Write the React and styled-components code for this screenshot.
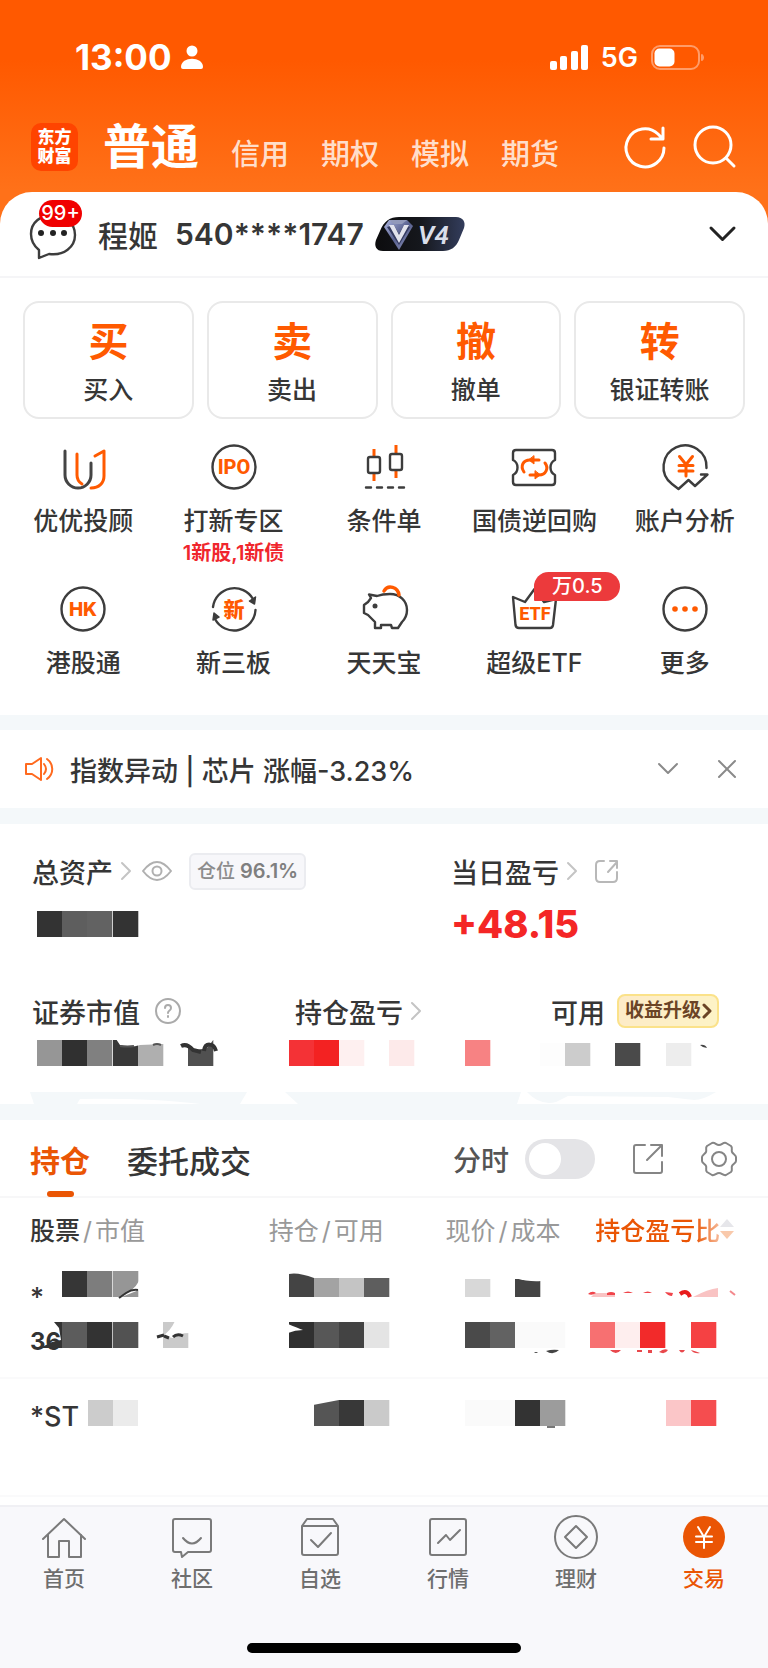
import React, { useState } from "react";
import styled, { createGlobalStyle } from "styled-components";

const GlobalStyle = createGlobalStyle`
  * {
    box-sizing: border-box;
  }
  body {
    margin: 0;
    background: #fff;
    color: #363636;
    font-family: "Inter", "Noto Sans CJK SC", sans-serif;
    font-weight: 500;
  }
  button {
    padding: 0;
    border: 0;
    background: none;
    color: inherit;
    font: inherit;
    cursor: pointer;
  }
  a {
    color: inherit;
    text-decoration: none;
  }
  svg {
    display: block;
    flex: none;
    overflow: visible;
  }
`;

const orange = "#ff5a00";
const deepOrange = "#ea5504";
const dark = "#3d3d3d";

// Layout

const Page = styled.div`
  display: flex;
  flex-direction: column;
  min-height: 100vh;
  background: linear-gradient(#ff5900 60px, #ff7119 190px) no-repeat;
  background-size: 100% 240px;
`;

const Sheet = styled.main`
  flex: 1;
  display: flex;
  flex-direction: column;
  background: #fff;
  border-radius: 32px 32px 0 0;
`;

const Divider = styled.div`
  height: ${(p) => p.$height || 16}px;
  background: #f4f8fa;
`;

const Spacer = styled.div`
  flex: 1;
`;

// Status bar

const StatusBar = styled.div`
  display: flex;
  align-items: center;
  height: 114px;
  padding: 0 64px 0 75px;
  color: #fff;
`;

const Clock = styled.span`
  margin-right: 9px;
  font-size: 35px;
  font-weight: 700;
`;

const Network = styled.span`
  margin: 0 13px;
  font-size: 27px;
  font-weight: 600;
`;

// Header

const Header = styled.header`
  display: flex;
  align-items: center;
  height: 78px;
  padding: 0 33px 12px 31px;
  color: #fff;
`;

const Logo = styled.div`
  width: 47px;
  padding: 5px 0;
  border-radius: 10px;
  background: #ff4400;
  font-size: 17px;
  font-weight: 900;
  line-height: 19px;
  text-align: center;
`;

const AccountTabs = styled.nav`
  flex: 1;
  display: flex;
  align-items: flex-end;
  gap: 32px;
  margin-left: 25px;
`;

const AccountTab = styled.a`
  font-size: ${(p) => (p.$active ? 48 : 29)}px;
  font-weight: ${(p) => (p.$active ? 700 : 500)};
  line-height: ${(p) => (p.$active ? 56 : 40)}px;
  color: ${(p) => (p.$active ? "#fff" : "rgba(255, 255, 255, 0.8)")};
`;

const HeaderActions = styled.div`
  display: flex;
  gap: 27px;
`;

// Account row

const AccountRow = styled.section`
  display: flex;
  align-items: center;
  height: 86px;
  padding: 0 32px 0 28px;
  border-bottom: 2px solid #f5f5f7;
`;

const Messages = styled.button`
  position: relative;
  margin-right: 20px;
`;

const UnreadBadge = styled.span`
  position: absolute;
  top: -7px;
  left: 11px;
  width: 43px;
  border-radius: 14px;
  background: #f00000;
  color: #fff;
  font-size: 20px;
  line-height: 27px;
  text-align: center;
`;

const AccountName = styled.span`
  margin-right: 17px;
  font-size: 30px;
`;

const AccountNumber = styled.span`
  margin-right: 11px;
  font-size: 30px;
  font-weight: 600;
`;

const ExpandButton = styled.button`
  margin-left: auto;
`;

// Trade buttons

const TradeGrid = styled.div`
  display: grid;
  grid-template-columns: repeat(4, 1fr);
  gap: 13px;
  padding: 23px 23px 0;
`;

const TradeButton = styled.button`
  height: 118px;
  padding-top: 6px;
  border: 2px solid #e9e9e9;
  border-radius: 16px;
  font-size: 25px;
  line-height: 36px;
`;

const TradeGlyph = styled.strong`
  display: block;
  margin-bottom: 6px;
  color: ${orange};
  font-size: 40px;
  font-weight: 700;
  line-height: 48px;
`;

// Shortcuts

const ShortcutGrid = styled.div`
  display: grid;
  grid-template-columns: repeat(5, 1fr);
  grid-auto-rows: 142px;
  padding: 24px 8px 0;
  margin-bottom: -12px;
`;

const Shortcut = styled.a`
  display: flex;
  flex-direction: column;
  align-items: center;
  font-size: 25px;
  line-height: 36px;
  white-space: nowrap;
`;

const ShortcutIcon = styled.span`
  position: relative;
  margin-bottom: 12px;
`;

const ShortcutBadge = styled.span`
  position: absolute;
  top: -13px;
  left: 24px;
  width: 86px;
  border-radius: 15px 15px 15px 1px;
  background: #ec3a3c;
  color: #fff;
  font-size: 20px;
  line-height: 29px;
  text-align: center;
`;

const ShortcutNote = styled.span`
  color: #f0262d;
  font-size: 20px;
  font-weight: 600;
  line-height: 28px;
`;

// News

const NewsRow = styled.section`
  display: flex;
  align-items: center;
  height: 78px;
  padding: 0 32px 0 24px;
`;

const NewsText = styled.a`
  flex: 1;
  margin-left: 16px;
  font-size: 27px;
`;

const NewsActions = styled.div`
  display: flex;
  align-items: center;
  gap: 40px;
`;

// Assets

const Assets = styled.section`
  padding-top: 30px;
`;

const AssetGrid = styled.div`
  display: grid;
  grid-template-columns: ${(p) => p.$columns};
  margin-bottom: ${(p) => p.$gap || 0}px;
  padding: 0 32px;
`;

const AssetLabel = styled.div`
  display: flex;
  align-items: center;
  gap: 8px;
  height: 36px;
  padding-bottom: 2px;
  font-size: 27px;
  white-space: nowrap;
`;

const AssetValue = styled.div`
  display: flex;
  align-items: center;
  height: ${(p) => p.$height}px;
  margin-top: 10px;
  color: #f42626;
  font-size: 38px;
  font-weight: 800;
`;

const PositionTag = styled.span`
  margin-left: 6px;
  padding: 0 6px;
  border: 2px solid #ebecf0;
  border-radius: 6px;
  background: #f7f7fa;
  color: #8c8c8c;
  font-size: 19px;
  line-height: 32px;

  b {
    color: #7f7f7f;
    font-size: 20px;
    font-weight: 600;
  }
`;

const UpgradeTag = styled.a`
  display: flex;
  align-items: center;
  gap: 2px;
  margin-left: 4px;
  padding: 0 6px;
  border: 2px solid #fbe28a;
  border-radius: 8px;
  background: linear-gradient(100deg, #fdebc8, #fdf3c6);
  color: #6b4426;
  font-size: 19px;
  font-weight: 700;
  line-height: 30px;
`;

// Holdings

const HoldingsBar = styled.div`
  display: flex;
  align-items: center;
  height: 78px;
  padding: 2px 31px 0 30px;
  border-bottom: 2px solid #f7f7f8;
`;

const HoldingsTab = styled.button`
  position: relative;
  height: 76px;
  margin-right: 37px;
  color: ${(p) => (p.$active ? deepOrange : "#363636")};
  font-size: ${(p) => (p.$active ? 30 : 31)}px;
  font-weight: ${(p) => (p.$active ? 700 : 500)};

  &::after {
    content: "";
    display: ${(p) => (p.$active ? "block" : "none")};
    position: absolute;
    bottom: 0;
    left: calc(50% - 13px);
    width: 27px;
    height: 6px;
    border-radius: 3px;
    background: ${deepOrange};
  }
`;

const HoldingsActions = styled.div`
  display: flex;
  align-items: center;
  gap: 37px;
  margin-left: auto;
`;

const SwitchLabel = styled.label`
  display: flex;
  align-items: center;
  gap: 16px;
  color: #555;
  font-size: 28px;
`;

const Switch = styled.input`
  appearance: none;
  display: flex;
  width: 70px;
  height: 40px;
  margin: 0;
  padding: 4px;
  border-radius: 20px;
  background: ${(p) => (p.checked ? deepOrange : "#e4e4e7")};
  justify-content: ${(p) => (p.checked ? "flex-end" : "flex-start")};

  &::before {
    content: "";
    width: 32px;
    height: 32px;
    border-radius: 50%;
    background: #fff;
  }
`;

const HoldingsTable = styled.table`
  width: 100%;
  border-collapse: collapse;
  table-layout: fixed;

  th {
    height: 62px;
    padding: 0;
    color: #999;
    font-size: 25px;
    font-weight: 400;
    text-align: left;
    white-space: nowrap;
  }
  td {
    height: 118px;
    padding: 11px 0 0;
    border-bottom: 2px solid #fafafb;
    vertical-align: top;
  }
  th:first-child,
  td:first-child {
    padding-left: 30px;
  }
  th:last-child,
  td:last-child {
    padding-left: 4px;
  }
  th b {
    color: #363636;
    font-weight: 500;
  }
`;

const Slash = styled.span`
  padding: 0 3px;
`;

const SortButton = styled.button`
  display: flex;
  align-items: center;
  color: ${deepOrange};
  font-weight: 500;

  span {
    mask-image: linear-gradient(90deg, #000 80%, rgba(0, 0, 0, 0.4));
  }
`;

const StockLine = styled.div`
  display: flex;
  height: 51px;
`;

const StockName = styled.span`
  width: ${(p) => p.$width}px;
  padding-top: 9px;
  font-size: 27px;
  line-height: 36px;
`;

// Tab bar

const TabBar = styled.footer`
  padding: 8px 0 15px;
  border-top: 2px solid #f0f0f4;
  background: #f8f8fb;
`;

const TabList = styled.nav`
  display: grid;
  grid-template-columns: repeat(6, 1fr);
  margin-bottom: 49px;
`;

const Tab = styled.a`
  display: flex;
  flex-direction: column;
  align-items: center;
  gap: 5px;
  color: ${(p) => (p.$active ? deepOrange : "#6e6e6e")};
  font-size: 21px;
  line-height: 30px;
`;

const HomeIndicator = styled.div`
  width: 274px;
  height: 10px;
  margin: 0 auto;
  border-radius: 5px;
  background: #000;
`;

// Icons

const Icon = ({ w = 48, h = w, color = dark, stroke = 2.4, children }) => (
  <svg
    width={w}
    height={h}
    viewBox={`0 0 ${w} ${h}`}
    fill="none"
    stroke={color}
    strokeWidth={stroke}
    strokeLinecap="round"
    strokeLinejoin="round"
    aria-hidden="true"
  >
    {children}
  </svg>
);

const IconText = styled.text`
  fill: ${orange};
  stroke: none;
  font-family: ${(p) => p.$font || "Roboto"}, "Noto Sans CJK SC", sans-serif;
  font-size: ${(p) => p.$size || 20}px;
  font-weight: 800;
  text-anchor: middle;
`;

const Chevron = () => (
  <Icon w={10} h={18} color="#c4c4c4" stroke={2}>
    <path d="M1 1l8 8-8 8" />
  </Icon>
);

const VipBadge = () => (
  <svg width="90" height="36" viewBox="0 0 90 36" role="img" aria-label="V4">
    <defs>
      <linearGradient id="vip" x1="0" x2="1">
        <stop offset="0" stopColor="#0c0c0e" />
        <stop offset="0.5" stopColor="#15171c" />
        <stop offset="1" stopColor="#333d5c" />
      </linearGradient>
      <linearGradient id="gem" x1="0" x2="1" y2="1">
        <stop offset="0" stopColor="#aeb6e0" />
        <stop offset="0.5" stopColor="#59618f" />
        <stop offset="1" stopColor="#8d93b8" />
      </linearGradient>
    </defs>
    <path
      d="M24 1h57c7 0 10 5 8 11l-5 12c-3 7-8 11-16 11H8c-7 0-9-5-7-11l4-9C9 5 15 1 24 1z"
      fill="url(#vip)"
    />
    <path d="M14 4h18l6 6-14 24L9 11z" fill="url(#gem)" />
    <path d="M12 11l7-2 5 9 5-9 6 2-11 18z" fill="#343a60" />
    <path d="M14 9h5l5 10 5-10h5l-10 18z" fill="#e2e3ed" />
    <path d="M14 4h18l-5 4h-8z" fill="#9299ba" />
    <text
      x="43"
      y="28"
      fill="#d9deea"
      fontFamily="Roboto, sans-serif"
      fontSize="26"
      fontStyle="italic"
      fontWeight="600"
    >
      V4
    </text>
  </svg>
);

const shortcuts = [
  {
    label: "优优投顾",
    icon: (
      <>
        <path d="M6 8v24a13 13 0 0 0 26 0V20" stroke="#444" strokeWidth="3" />
        <path d="M18 11v21q0 6 5 9" stroke={orange} strokeWidth="3" />
        <path d="M36 13l9-5v25c0 7-5 12-13 12" stroke={orange} strokeWidth="3" />
      </>
    ),
  },
  {
    label: "打新专区",
    note: "1新股,1新债",
    icon: (
      <>
        <circle cx="24" cy="24" r="21.5" />
        <IconText x="24" y="31">
          IPO
        </IconText>
      </>
    ),
  },
  {
    label: "条件单",
    icon: (
      <>
        <g stroke={orange} strokeWidth="3" strokeLinecap="butt">
          <path d="M14 6v7M14 31v7M36 2v8M36 28v7" />
        </g>
        <rect x="8" y="14" width="12" height="16" rx="2" />
        <rect x="30" y="11" width="12" height="16" rx="2" />
        <path d="M6 44.500h5M17 44.500h5M28 44.500h5M39 44.500h5" />
      </>
    ),
  },
  {
    label: "国债逆回购",
    icon: (
      <>
        <path d="M6 7h36q3 0 3 3v7c-6 3-6 12 0 15v7q0 3-3 3H6q-3 0-3-3v-7c6-3 6-12 0-15v-7q0-3 3-3z" />
        <g stroke={orange} strokeWidth="3">
          <path d="M14 29c-4-6-1-12 6-12h9M35 20c4 5 1 12-6 12h-9" />
          <path
            d="M24 13v8l-5-4zM25 28v8l5-4z"
            fill={orange}
            strokeWidth="1"
          />
        </g>
      </>
    ),
  },
  {
    label: "账户分析",
    icon: (
      <>
        <path d="M45.500 25A21.500 21.500 0 1 0 11 41l6.500 5 10-9 6.500 6 12.500-11.500H40" />
        <path
          d="M18.500 13.500l6.500 8 6.500-8M25 22v11M18 22.500h14M18 28h14"
          stroke={orange}
          strokeWidth="3"
        />
      </>
    ),
  },
  {
    label: "港股通",
    icon: (
      <>
        <circle cx="24" cy="24" r="21.500" />
        <IconText x="24" y="31" $font="Inter" $size={19}>
          HK
        </IconText>
      </>
    ),
  },
  {
    label: "新三板",
    icon: (
      <>
        <path d="M3 22A21.500 21.500 0 0 1 43 14M45.500 25A21.500 21.500 0 0 1 5 34" />
        <path d="M45.500 12l-1 7-5-3zM3 35l1-7 5 4z" fill={dark} strokeWidth="1.500" />
        <IconText x="24" y="32" $size={21}>
          新
        </IconText>
      </>
    ),
  },
  {
    label: "天天宝",
    icon: (
      <>
        <path d="M9 9.500l8 1.500c4-1.500 8-2 13-2 10 0 17 7 17 16 0 5-2 9-5 12l-4 6h-6l-1-3H21v3h-6v-6l-7-7-4-2v-8l4-3 3-4z" />
        <circle cx="15" cy="21" r="2.500" fill={dark} stroke="none" />
        <path d="M24 6c4-7 14-4 15 4" stroke={orange} strokeWidth="3.500" />
      </>
    ),
  },
  {
    label: "超级ETF",
    badge: "万0.5",
    icon: (
      <>
        <path d="M3 12l12 5L24.500 4 34 17l12-3-3 26q-.5 3-3 3H9q-3 0-3.500-3z" />
        <IconText x="25" y="35" $size={18}>
          ETF
        </IconText>
      </>
    ),
  },
  {
    label: "更多",
    icon: (
      <>
        <circle cx="24" cy="24" r="21.500" />
        <g fill={orange} stroke="none">
          <circle cx="14" cy="24" r="2.800" />
          <circle cx="24" cy="24" r="2.800" />
          <circle cx="34" cy="24" r="2.800" />
        </g>
      </>
    ),
  },
];

const tabs = [
  {
    label: "首页",
    icon: (
      <>
        <path d="M1 24L22 4l21 20" />
        <path d="M6 20v22h11V26h10v16h12V20" />
      </>
    ),
  },
  {
    label: "社区",
    icon: (
      <>
        <path d="M5 4h34q2 0 2 2v29q0 2-2 2H18l-6 5-1-5H5q-2 0-2-2V6q0-2 2-2z" />
        <path d="M13 23q9 11 18 0" />
      </>
    ),
  },
  {
    label: "自选",
    icon: (
      <>
        <path d="M4 11l5-7h26l5 7v27q0 2-2 2H6q-2 0-2-2zM4 11h36" />
        <path d="M13 25l7 7 13-14" />
      </>
    ),
  },
  {
    label: "行情",
    icon: (
      <>
        <rect x="4" y="4" width="36" height="36" rx="2" />
        <path d="M12 28l8-8 4 5 10-10" />
      </>
    ),
  },
  {
    label: "理财",
    icon: (
      <>
        <circle cx="22" cy="22" r="21" />
        <path d="M22 11l11 11-11 11-11-11z" />
      </>
    ),
  },
  {
    label: "交易",
    active: true,
    icon: (
      <>
        <circle cx="22" cy="22" r="21" fill={deepOrange} stroke="none" />
        <path
          d="M16 12l6 10 6-10M22 22v11M14 21.500h16M14 27h16"
          stroke="#fff"
        />
      </>
    ),
  },
];

const trades = [
  ["买", "买入"],
  ["卖", "卖出"],
  ["撤", "撤单"],
  ["转", "银证转账"],
];

// Hides private amounts behind a strip of blocks: [x, colour] per block
const Mosaic = ({ cells, top = 0, height = 26, children }) => (
  <svg width="100" height="26" viewBox="0 0 100 26" aria-hidden="true">
    {cells.map(([x, color]) => (
      <rect key={x} x={x} y={top} width="25.300" height={height - top} fill={color} />
    ))}
    {children}
  </svg>
);

const App = () => {
  const [minuteChart, setMinuteChart] = useState(false);

  return (
    <>
      <GlobalStyle />
      <Page>
        <StatusBar>
          <Clock>13:00</Clock>
          <Icon w={22} h={24} color="none">
            <circle cx="11" cy="6" r="5.500" fill="#fff" />
            <path d="M0 22c0-11 22-11 22 0q0 2-2 2H2q-2 0-2-2z" fill="#fff" />
          </Icon>
          <Spacer />
          <Icon w={38} h={25} color="none">
            <g fill="#fff">
              <rect y="16" width="7" height="9" rx="2" />
              <rect x="10" y="11" width="7" height="14" rx="2" />
              <rect x="21" y="6" width="7" height="19" rx="2" />
              <rect x="31" width="7" height="25" rx="2" />
            </g>
          </Icon>
          <Network>5G</Network>
          <Icon w={53} h={25} color="#ff9c69" stroke={2}>
            <rect x="1" y="1" width="47" height="23" rx="8" />
            <rect x="3.500" y="3.500" width="20" height="18" rx="5" fill="#fff" stroke="none" />
            <path d="M51 10q2 2.500 0 5z" />
          </Icon>
        </StatusBar>

        <Header>
          <Logo>
            东方
            <br />
            财富
          </Logo>
          <AccountTabs>
            <AccountTab href="#normal" $active>
              普通
            </AccountTab>
            <AccountTab href="#credit">信用</AccountTab>
            <AccountTab href="#options">期权</AccountTab>
            <AccountTab href="#paper">模拟</AccountTab>
            <AccountTab href="#futures">期货</AccountTab>
          </AccountTabs>
          <HeaderActions>
            <button aria-label="刷新">
              <Icon w={42} color="#fff" stroke={3}>
                <path d="M40 22A19 19 0 1 1 34 8l5 5M39 2v11H27" />
              </Icon>
            </button>
            <button aria-label="搜索">
              <Icon w={42} color="#fff" stroke={3}>
                <circle cx="20" cy="19" r="18" />
                <path d="M33 32l8 8" />
              </Icon>
            </button>
          </HeaderActions>
        </Header>

        <Sheet>
          <AccountRow>
            <Messages aria-label="消息">
              <Icon w={50} h={54}>
                <path d="M11 43v8l10-4C36 49 47 40 47 28S37 8 25 8 3 15 3 27c0 7 3 12 8 16z" />
                <g fill="#222" stroke="none">
                  <circle cx="13" cy="26" r="3" />
                  <circle cx="25" cy="26" r="3" />
                  <circle cx="36" cy="26" r="3" />
                </g>
              </Icon>
              <UnreadBadge>99+</UnreadBadge>
            </Messages>
            <AccountName>程姬</AccountName>
            <AccountNumber>540****1747</AccountNumber>
            <VipBadge />
            <ExpandButton aria-label="切换账户">
              <Icon w={27} h={16} color="#222" stroke={3}>
                <path d="M2 2l11.500 11.500L25 2" />
              </Icon>
            </ExpandButton>
          </AccountRow>

          <TradeGrid>
            {trades.map(([glyph, label]) => (
              <TradeButton key={label}>
                <TradeGlyph>{glyph}</TradeGlyph>
                {label}
              </TradeButton>
            ))}
          </TradeGrid>

          <ShortcutGrid>
            {shortcuts.map(({ label, icon, note, badge }) => (
              <Shortcut key={label} href="#shortcut">
                <ShortcutIcon>
                  <Icon>{icon}</Icon>
                  {badge && <ShortcutBadge>{badge}</ShortcutBadge>}
                </ShortcutIcon>
                {label}
                {note && <ShortcutNote>{note}</ShortcutNote>}
              </Shortcut>
            ))}
          </ShortcutGrid>

          <Divider $height={15} />
          <NewsRow>
            <Icon w={30} h={26} color="#ff6a1f" stroke={2}>
              <path d="M2 8h6l9-6v22l-9-6H2zM20 8q4 5 0 10M23 3c7 5 7 15 0 20" />
            </Icon>
            <NewsText href="#news">指数异动 | 芯片 涨幅-3.23%</NewsText>
            <NewsActions>
              <button aria-label="展开">
                <Icon w={20} h={12} color="#8a8a8a" stroke={2}>
                  <path d="M1 1l9 9 9-9" />
                </Icon>
              </button>
              <button aria-label="关闭">
                <Icon w={18} color="#8a8a8a" stroke={2}>
                  <path d="M1 1l16 16M17 1L1 17" />
                </Icon>
              </button>
            </NewsActions>
          </NewsRow>
          <Divider />

          <Assets>
            <AssetGrid $columns="419fr 285fr" $gap={46}>
              <div>
                <AssetLabel>
                  总资产
                  <Chevron />
                  <Icon w={36} h={24} color="#b0b0b0" stroke={2}>
                    <path d="M4 12q14-18 28 0-14 18-28 0z" />
                    <circle cx="18" cy="12" r="4.500" />
                  </Icon>
                  <PositionTag>
                    仓位 <b>96.1%</b>
                  </PositionTag>
                </AssetLabel>
                <AssetValue $height={48}>
                  <Mosaic
                    cells={[
                      [5, "#333"],
                      [30, "#5e5e5e"],
                      [55, "#626262"],
                      [81, "#333"],
                    ]}
                  />
                </AssetValue>
              </div>
              <div>
                <AssetLabel>
                  当日盈亏
                  <Chevron />
                  <Icon w={38} h={24} color="#b8b8b8" stroke={2}>
                    <path d="M19 2h-4q-4 0-4 4v13q0 4 4 4h13q4 0 4-4v-6M23 13L32 3M25 2h7v7" />
                  </Icon>
                </AssetLabel>
                <AssetValue $height={48}>+48.15</AssetValue>
              </div>
            </AssetGrid>

            <AssetGrid $columns="263fr 256fr 185fr" $gap={26}>
              <div>
                <AssetLabel>
                  证券市值
                  <Icon w={38} h={26} color="#aaa" stroke={2}>
                    <circle cx="20" cy="13" r="12" />
                    <path d="M17 10c0-4 6-4 6 0 0 3-3 2-3 5M20 18v1" />
                  </Icon>
                </AssetLabel>
                <AssetValue $height={26}>
                  <Mosaic
                    cells={[
                      [5, "#969696"],
                      [30, "#303030"],
                      [55, "#808080"],
                      [81, "#383838"],
                      [106, "#afafaf"],
                      [156, "#505050"],
                    ]}
                  >
                    <path d="M84-1l4 6q10 3 20 0l24-1v-5z" fill="#fff" />
                    <path
                      d="M88 6q8 1 14 0M121 5q4-2 8 0"
                      fill="none"
                      stroke="#555"
                      strokeWidth="2"
                    />
                    <path d="M155-1v7l10 4 10-2 7-9z" fill="#fff" />
                    <path
                      d="M149 6q6-3 12 4l8 2M172 11c1-9 10-8 12 0"
                      fill="none"
                      stroke="#333"
                      strokeWidth="4"
                    />
                  </Mosaic>
                </AssetValue>
              </div>
              <div>
                <AssetLabel>
                  持仓盈亏
                  <Chevron />
                </AssetLabel>
                <AssetValue $height={26}>
                  <Mosaic
                    cells={[
                      [-6, "#f43236"],
                      [19, "#f32222"],
                      [44, "#fef0f0"],
                      [94, "#fdeaea"],
                      [170, "#f78283"],
                    ]}
                  />
                </AssetValue>
              </div>
              <div>
                <AssetLabel>
                  可用
                  <UpgradeTag href="#upgrade">
                    收益升级
                    <Icon w={8} h={14} color="#6b4426" stroke={3}>
                      <path d="M1 1l6 6-6 6" />
                    </Icon>
                  </UpgradeTag>
                </AssetLabel>
                <AssetValue $height={26}>
                  <Mosaic
                    top={3}
                    cells={[
                      [-11, "#fdfdfd"],
                      [14, "#ccc"],
                      [64, "#4a4a4a"],
                      [115, "#ededed"],
                    ]}
                  >
                    <path d="M149 5q5-1 7 3-4 0-7-3z" fill="#444" />
                  </Mosaic>
                </AssetValue>
              </div>
            </AssetGrid>
            <svg width="100%" height="12" viewBox="0 0 768 12" preserveAspectRatio="none" aria-hidden="true">
              <g fill="#f4f8fa">
                <path d="M30 0h217l-7 12h-40q-50-6-120-5l-3 5H34z" />
                <path d="M285 0h236l-4 12H298z" />
                <path d="M527 0h189q-13 8-22 8l-26-3-100-1-12 6q-16 4-29-10z" />
              </g>
            </svg>
          </Assets>
          <Divider />

          <HoldingsBar>
            <HoldingsTab $active>持仓</HoldingsTab>
            <HoldingsTab>委托成交</HoldingsTab>
            <HoldingsActions>
              <SwitchLabel>
                分时
                <Switch
                  type="checkbox"
                  role="switch"
                  checked={minuteChart}
                  onChange={(e) => setMinuteChart(e.target.checked)}
                />
              </SwitchLabel>
              <button aria-label="分享">
                <Icon w={32} color="#858585" stroke={2}>
                  <path d="M13 2H4q-2 0-2 2v24q0 2 2 2h24q2 0 2-2v-9M15 17L30 2M19 2h11v11" />
                </Icon>
              </button>
              <button aria-label="设置">
                <Icon w={36} color="#858585" stroke={2}>
                  <path d="M11 2c3-1 4 2 7 2s4-3 7-2l5 3c2 2 0 4 1 6s4 3 4 5v4c0 2-3 3-4 5s1 4-1 6l-5 3c-3 1-4-2-7-2s-4 3-7 2l-5-3c-2-2 0-4-1-6s-4-3-4-5v-4c0-2 3-3 4-5s-1-4 1-6z" />
                  <circle cx="18" cy="18" r="7" />
                </Icon>
              </button>
            </HoldingsActions>
          </HoldingsBar>

          <HoldingsTable>
            <colgroup>
              <col width="35%" />
              <col width="23%" />
              <col width="19%" />
              <col />
            </colgroup>
            <thead>
              <tr>
                <th>
                  <b>股票</b>
                  <Slash>/</Slash>市值
                </th>
                <th>
                  持仓<Slash>/</Slash>可用
                </th>
                <th>
                  现价<Slash>/</Slash>成本
                </th>
                <th>
                  <SortButton>
                    <span>持仓盈亏比</span>
                    <Icon w={14} h={20} color="none">
                      <path d="M7 0l7 8H0z" fill="#e6e6ea" />
                      <path d="M7 20l7-8H0z" fill="#f9c9ab" />
                    </Icon>
                  </SortButton>
                </th>
              </tr>
            </thead>
            <tbody>
              <tr>
                <td>
                  <StockLine>
                    <StockName $width={32}>*</StockName>
                    <Mosaic
                      cells={[
                        [0, "#363636"],
                        [25, "#7d7d7d"],
                        [51, "#969696"],
                      ]}
                    >
                      <path d="M77 10Q72 20 57 27l20-8z" fill="#fff" />
                      <path d="M57 27l7-5M64 22q6-4 12-3" fill="none" stroke="#333" strokeWidth="2" />
                    </Mosaic>
                  </StockLine>
                  <Mosaic
                    cells={[
                      [32, "#5c5c5c"],
                      [57, "#333"],
                      [83, "#525252"],
                      [133, "#cacaca"],
                    ]}
                  >
                    <text x="0" y="28" fill="#333" fontSize="24" fontWeight="700">
                      36
                    </text>
                    <path d="M24 0h8v26H10l12-6 9-2-2-12z" fill="#333" />
                    <path d="M145-1h15v12q-12 0-17 5l-11-2q8-4 13-15z" fill="#fff" />
                    <path
                      d="M127 15l7-2M134 14l5 2M143 15q4-4 10-1"
                      fill="none"
                      stroke="#333"
                      strokeWidth="3"
                    />
                  </Mosaic>
                </td>
                <td>
                  <StockLine>
                    <Mosaic
                      top={7}
                      cells={[
                        [20, "#444"],
                        [45, "#a3a3a3"],
                        [70, "#c4c4c4"],
                        [95, "#5e5e5e"],
                      ]}
                    >
                      <path d="M20 8V3q9-2 25 4v1z" fill="#444" />
                    </Mosaic>
                  </StockLine>
                  <Mosaic
                    cells={[
                      [20, "#303030"],
                      [45, "#575757"],
                      [70, "#434343"],
                      [95, "#e4e4e4"],
                    ]}
                  >
                    <path d="M19 2q10 4 15 6-8 0-15 3z" fill="#fff" />
                  </Mosaic>
                </td>
                <td>
                  <StockLine>
                    <Mosaic
                      top={8}
                      cells={[
                        [20, "#d8d8d8"],
                        [70, "#444"],
                      ]}
                    >
                      <path d="M70 7q14 4 26 3V6z" fill="#fff" />
                    </Mosaic>
                  </StockLine>
                  <Mosaic
                    cells={[
                      [20, "#4a4a4a"],
                      [45, "#626262"],
                      [70, "#fafafa"],
                      [95, "#fafafa"],
                    ]}
                  >
                    <path d="M89 31q2-2 4 0zM101 29q6-2 13-1-6 6-13 1z" fill="#444" />
                  </Mosaic>
                </td>
                <td>
                  <StockLine>
                    <Mosaic cells={[]}>
                      <path d="M-4 26l4-4h20v4zM98 26q15-8 25-9v9z" fill="#f9c3c3" />
                      <path
                        d="M-7 23q4-4 8-1-4 3-8 1zM12 22q4-2 8 0v2h-8zM28 22q5-3 10 0zM48 22q5-3 9 0zM70 21l8 1-1 3q-4 0-7-4z"
                        fill="#f0444a"
                      />
                      <path d="M85 23q7-5 10 3" fill="none" stroke="#e81c1c" strokeWidth="4" />
                      <path d="M135 20l5 4" stroke="#f3888c" strokeWidth="2" />
                    </Mosaic>
                  </StockLine>
                  <Mosaic
                    cells={[
                      [-5, "#f77071"],
                      [20, "#feeeee"],
                      [45, "#f22a2a"],
                      [96, "#f54143"],
                    ]}
                  >
                    <path
                      d="M15 28h11q-5 6-11 0zM42 28h5v2h-5zM53 28h4v3h-4zM64 30q5-4 9-2-3 5-9 2zM84 28h6q-3 5-6 0zM96 28q4 1 9 3-6 1-9-3z"
                      fill="#e8484c"
                    />
                  </Mosaic>
                </td>
              </tr>
              <tr>
                <td>
                  <StockLine>
                    <StockName $width={58}>*ST</StockName>
                    <svg width="50" height="46" viewBox="0 0 50 46" aria-hidden="true">
                      <rect y="10" width="25" height="26" fill="#ccc" />
                      <rect x="25" y="10" width="25" height="26" fill="#ebebeb" />
                    </svg>
                  </StockLine>
                </td>
                <td>
                  <Mosaic
                    top={10}
                    height={36}
                    cells={[
                      [45, "#555"],
                      [70, "#383838"],
                      [95, "#cacaca"],
                    ]}
                  >
                    <path d="M44 15l26-5v-1H44z" fill="#fff" />
                  </Mosaic>
                </td>
                <td>
                  <Mosaic
                    top={10}
                    height={36}
                    cells={[
                      [20, "#fafafa"],
                      [45, "#fafafa"],
                      [70, "#333"],
                      [95, "#9c9c9c"],
                    ]}
                  >
                    <path d="M102 37h8" stroke="#777" strokeWidth="2" />
                  </Mosaic>
                </td>
                <td>
                  <Mosaic
                    top={10}
                    height={36}
                    cells={[
                      [71, "#fbc6c8"],
                      [96, "#f54d4f"],
                    ]}
                  />
                </td>
              </tr>
            </tbody>
          </HoldingsTable>
          <Spacer />
        </Sheet>

        <TabBar>
          <TabList>
            {tabs.map(({ label, icon, active }) => (
              <Tab key={label} href="#tab" $active={active}>
                <Icon w={44} color="#7a7a7a" stroke={2}>
                  {icon}
                </Icon>
                {label}
              </Tab>
            ))}
          </TabList>
          <HomeIndicator />
        </TabBar>
      </Page>
    </>
  );
};

export default App;
